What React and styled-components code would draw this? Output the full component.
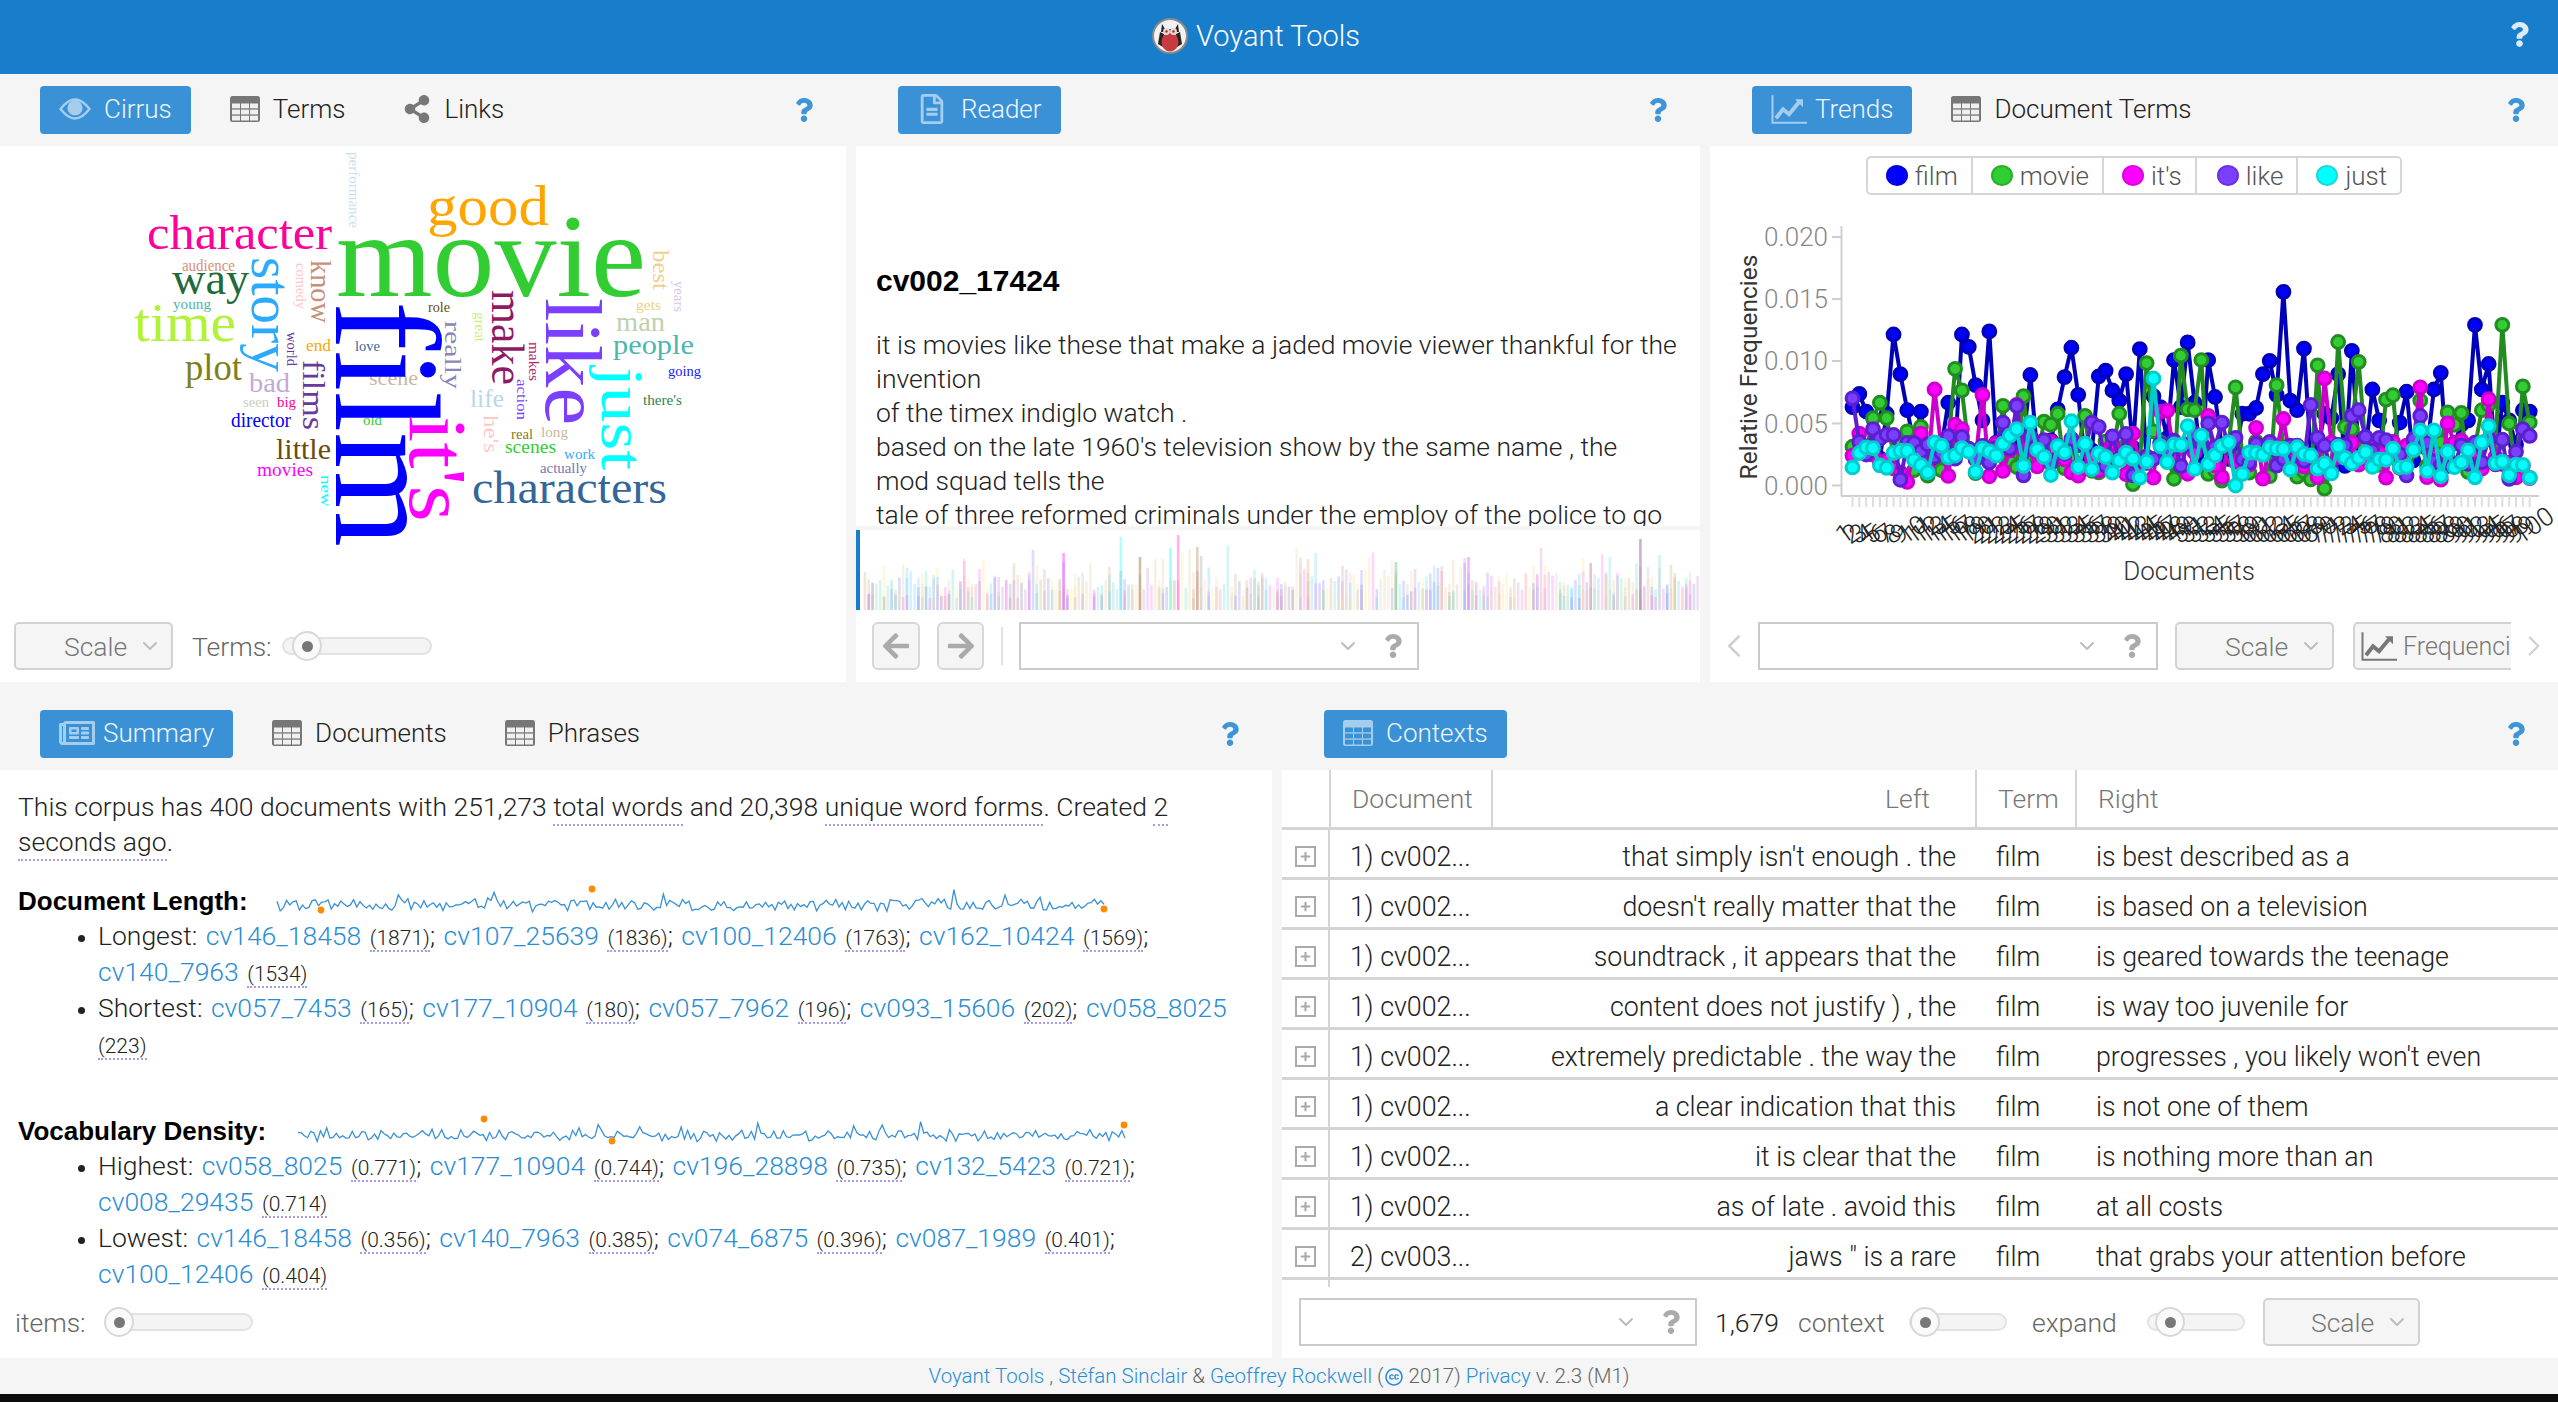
import React from 'react';
import styled, { createGlobalStyle } from 'styled-components';
import { FaShareAlt, FaRegFileAlt, FaRegNewspaper, FaQuestion, FaArrowLeft, FaArrowRight, FaCreativeCommons, FaPlus } from 'react-icons/fa';
import { ChevronDown, ChevronLeft, ChevronRight } from 'lucide-react';

const SANS = "Roboto, 'Liberation Sans', sans-serif";

const GlobalStyle = createGlobalStyle`
  html, body { margin: 0; padding: 0; background: #0c0c0c; overflow: hidden; }
  * { box-sizing: border-box; }
`;

const rng = (seed) => () => {
  seed = (seed * 1664525 + 1013904223) % 4294967296;
  return seed / 4294967296;
};

const Page = styled.div`
  width: 2558px;
  height: 1402px;
  display: flex;
  flex-direction: column;
  font-family: ${SANS};
  font-weight: 300;
  font-size: 26.5px;
  color: #222;
  background: #f5f5f5;
  border-bottom: 8px solid #0c0c0c;
`;

const Header = styled.header`
  height: 74px;
  flex: none;
  background: #187dca;
  display: flex;
  align-items: center;
  justify-content: center;
  gap: 8px;
  padding: 0 46px 3px 0;
  position: relative;
  color: #fff;
  font-size: 29px;
`;

const HeaderHelp = styled.span`
  position: absolute;
  right: 26px;
  top: 22px;
  color: #dcebf7;
  font-size: 25px;
  line-height: 1;
`;

const TopRow = styled.div`
  height: 608px;
  flex: none;
  display: grid;
  grid-template-columns: 846px 844px 1fr;
  gap: 10px;
`;

const BottomRow = styled.div`
  height: 676px;
  flex: none;
  display: grid;
  grid-template-columns: 1272px 1fr;
  gap: 10px;
`;

const Panel = styled.section`
  display: flex;
  flex-direction: column;
  min-width: 0;
  min-height: 0;
`;

const TabBar = styled.div`
  flex: none;
  height: ${(p) => p.$h}px;
  display: flex;
  align-items: flex-end;
  gap: 20px;
  padding: 0 30px 12px ${(p) => p.$pad}px;
`;

const Tab = styled.div`
  height: 48px;
  display: flex;
  align-items: center;
  gap: ${(p) => p.$gap || 13}px;
  padding: 0 19px 2px;
  border-radius: 4px;
  font-size: 26px;
  background: ${(p) => (p.$active ? '#3a91d6' : 'transparent')};
  color: ${(p) => (p.$active ? '#eef6fc' : '#222')};
  svg { flex: none; color: ${(p) => (p.$active ? '#a5cdee' : '#777')}; }
`;

const Help = styled.span`
  margin-left: auto;
  height: 48px;
  display: flex;
  align-items: center;
  color: #3d94d8;
  font-size: 24px;
`;

const Body = styled.div`
  flex: 1;
  min-height: 0;
  background: #fff;
  display: flex;
  flex-direction: column;
`;

const Toolbar = styled.div`
  flex: none;
  height: 48px;
  margin-bottom: 12px;
  display: flex;
  align-items: center;
  padding-left: ${(p) => p.$pad}px;
`;

const ScaleBtn = styled.div`
  flex: none;
  width: ${(p) => p.$w || 159}px;
  height: 48px;
  margin-left: ${(p) => p.$ml || 0}px;
  padding-left: ${(p) => p.$tx || 48}px;
  display: flex;
  align-items: center;
  gap: 11px;
  background: #f5f5f5;
  border: 2px solid #d2d2d2;
  border-radius: 5px;
  color: #777;
`;

const Label = styled.span`
  flex: none;
  width: ${(p) => p.$w}px;
  margin-left: ${(p) => p.$ml || 0}px;
  color: ${(p) => p.$c || '#666'};
`;

const Track = styled.div`
  flex: none;
  position: relative;
  width: ${(p) => p.$w}px;
  height: 18px;
  margin-left: ${(p) => p.$ml || 0}px;
  background: #f4f4f4;
  border: 2px solid #e2e2e2;
  border-radius: 9px;
`;

const Thumb = styled.div`
  position: absolute;
  top: -8px;
  left: ${(p) => p.$at}px;
  width: 30px;
  height: 30px;
  border-radius: 50%;
  background: #fafafa;
  border: 2px solid #d8d8d8;
  display: flex;
  align-items: center;
  justify-content: center;
  &::after {
    content: '';
    width: 11px;
    height: 11px;
    border-radius: 50%;
    background: #777;
  }
`;

const Slider = ({ w, ml, at }) => (
  <Track $w={w} $ml={ml}><Thumb $at={at} /></Track>
);

const ComboBox = styled.div`
  flex: none;
  width: ${(p) => p.$w}px;
  height: 48px;
  margin-left: ${(p) => p.$ml || 0}px;
  padding-right: 12px;
  border: 2px solid #cacaca;
  background: #fff;
  display: flex;
  align-items: center;
  justify-content: flex-end;
  gap: 21px;
  color: #aaa;
`;

const Combo = ({ w = 400, ml }) => (
  <ComboBox $w={w} $ml={ml}>
    <ChevronDown size={24} strokeWidth={2} color="#bdbdbd" />
    <FaQuestion size={24} />
  </ComboBox>
);

const Scale = ({ ml, w, tx }) => (
  <ScaleBtn $ml={ml} $w={w} $tx={tx}>
    Scale
    <ChevronDown size={24} strokeWidth={2} color="#bdbdbd" />
  </ScaleBtn>
);

/* icons */
const TableIcon = ({ cell = '#f0f0f0' }) => (
  <svg width="30" height="26" viewBox="0 0 30 26">
    <rect width="30" height="26" rx="2.5" fill="currentColor" />
    {[7.5, 13.6, 19.7].map((y) => [2, 11, 20].map((x) => (
      <rect key={`${x}-${y}`} x={x} y={y} width="8" height="4.8" fill={cell} />
    )))}
  </svg>
);

const EyeIcon = () => (
  <svg width="32" height="22" viewBox="0 0 32 22">
    <path d="M1.5 11C7 4 12 1.5 16 1.5S25 4 30.500 11C25 18 20 20.500 16 20.500S7 18 1.500 11Z" fill="none" stroke="currentColor" strokeWidth="2.4" />
    <circle cx="16" cy="10" r="7.6" fill="currentColor" />
  </svg>
);

const TrendIcon = ({ size = 36 }) => (
  <svg width={size} height={size * 0.85} viewBox="0 0 36 30" fill="none" stroke="currentColor">
    <path d="M1.500 1v27.500H36" strokeWidth="2" />
    <path d="M5 24l7-9 6 5 10-12" strokeWidth="4" />
    <path d="M24 5h8v8z" fill="currentColor" stroke="none" />
  </svg>
);

const OwlLogo = () => (
  <svg width="36" height="36" viewBox="0 0 36 36" role="img">
    <circle cx="18" cy="18" r="17" fill="#f2f2f2" stroke="#8a8a8a" strokeWidth="2" />
    <path d="M10 6l3 5h10l3-5 1 8H9z" fill="#2a2420" />
    <path d="M8 14l4 2-1 13-5-3zM28 14l-4 2 1 13 5-3z" fill="#2a2420" />
    <ellipse cx="18" cy="24" rx="8.500" ry="9.500" fill="#c63a40" />
    <circle cx="14.500" cy="13.500" r="3.400" fill="#ecd4d4" />
    <circle cx="21.500" cy="13.500" r="3.400" fill="#ecd4d4" />
    <circle cx="14.500" cy="13.500" r="1.200" fill="#8a3a3a" />
    <circle cx="21.500" cy="13.500" r="1.200" fill="#8a3a3a" />
  </svg>
);

/* cirrus */
const HORIZONTAL = [
  ['movie', 336, 646, 296, 118, '#32cd32'], ['good', 427, 549, 225, 58, '#ffa500'],
  ['character', 147, 332, 249, 48, '#ff0099'], ['way', 172, 249, 294, 46, '#1f6b3a'],
  ['time', 134, 236, 341, 55, '#b2f23a'], ['plot', 185, 242, 380, 38, '#7f7f22'],
  ['bad', 249, 290, 392, 28, '#c3a9d4'], ['audience', 182, 235, 271, 16, '#d8907a'],
  ['young', 173, 211, 309, 15, '#4db6ac'], ['seen', 243, 269, 407, 14, '#c8d0c0'],
  ['big', 277, 296, 407, 15, '#ff0090'], ['director', 231, 291, 427, 20, '#0000ff'],
  ['little', 276, 331, 459, 30, '#6b4c10'], ['movies', 257, 313, 476, 19, '#ff00ff'],
  ['end', 306, 331, 351, 17, '#ffa500'], ['love', 355, 380, 351, 15, '#3a6a9a'],
  ['role', 428, 450, 312, 14, '#6b4c10'], ['scene', 369, 418, 385, 22, '#c8b8a0'],
  ['old', 363, 382, 425, 14, '#32cd32'], ['man', 616, 665, 331, 27, '#c0d0b0'],
  ['people', 613, 694, 354, 27, '#4db6ac'], ['gets', 636, 661, 310, 14, '#f0d080'],
  ['going', 668, 701, 376, 14, '#2020ff'], ["there's", 643, 682, 405, 14, '#2f7f4f'],
  ['life', 470, 504, 407, 26, '#b8d8e8'], ['real', 511, 533, 439, 14, '#808020'],
  ['long', 541, 568, 437, 15, '#c8b8a0'], ['scenes', 505, 556, 453, 18, '#32cd32'],
  ['work', 564, 595, 459, 15, '#33aaff'], ['actually', 540, 587, 473, 15, '#7878b0'],
  ['characters', 472, 667, 503, 46, '#336699'],
];

const VERTICAL = [
  ['film', 336, 301, 547, 150, '#0000ff'], ["it's", 410, 416, 522, 82, '#ff00ff'],
  ['like', 546, 298, 425, 80, '#7b3fff'], ['just', 602, 367, 470, 62, '#00ffff'],
  ['make', 492, 290, 385, 46, '#8f1a63'], ['story', 252, 257, 372, 56, '#2baaff'],
  ['know', 311, 260, 323, 30, '#c8907a'], ['comedy', 296, 263, 309, 15, '#ffc8c8'],
  ['performance', 349, 152, 228, 15, '#c8dff0'], ['best', 653, 250, 290, 24, '#f0d090'],
  ['years', 674, 281, 312, 14, '#d8c8e8'], ['great', 475, 312, 342, 14, '#c8f080'],
  ['really', 445, 321, 389, 24, '#8888b8'], ['world', 287, 332, 366, 15, '#6a3a9a'],
  ['films', 303, 360, 430, 32, '#6a3a9a'], ['makes', 529, 342, 381, 14, '#aa2a6a'],
  ['action', 517, 379, 420, 15, '#7a40ff'], ["he's", 484, 415, 453, 22, '#ffc8c8'],
  ['new', 321, 475, 507, 15, '#00ffff'],
];

const CloudSvg = styled.svg`
  flex: 1;
  min-height: 0;
  display: block;
  font-family: 'Liberation Serif', serif;
`;

const Cirrus = () => (
  <CloudSvg width="846" height="476" viewBox="0 146 846 476">
    {HORIZONTAL.map(([t, x1, x2, y, s, c]) => (
      <text key={t} x={x1} y={y} fontSize={s} fill={c} textLength={x2 - x1} lengthAdjust="spacingAndGlyphs">{t}</text>
    ))}
    {VERTICAL.map(([t, x, y1, y2, s, c]) => (
      <text key={t} transform={`translate(${x},${y1}) rotate(90)`} fontSize={s} fill={c} textLength={y2 - y1} lengthAdjust="spacingAndGlyphs">{t}</text>
    ))}
  </CloudSvg>
);

/* reader */
const ReaderText = styled.div`
  height: 380px;
  flex: none;
  overflow: hidden;
  padding: 118px 0 0 20px;
  line-height: 34px;
  white-space: nowrap;
`;

const DocTitle = styled.div`
  font-family: 'Liberation Sans', sans-serif;
  font-weight: 700;
  font-size: 30px;
  color: #000;
  margin-bottom: 30px;
`;

const GraphSvg = styled.svg`
  display: block;
  flex: none;
  margin-bottom: 12px;
`;

const BAR_COLORS = ['#ff66ff', '#66ccff', '#c8a878', '#ffe680', '#bbbbbb', '#8080ff', '#66ddcc', '#f0d8a8', '#e8c8a0', '#cc88cc'];
const BAR_PEAKS = [
  [69, 73, '#66ffff'], [84, 75, '#ff66dd'], [89, 63, '#c8a878'], [205, 71, '#a060a0'], [74, 53, '#a08050'],
  [54, 57, '#ff44ff'], [82, 62, '#44ffff'], [116, 52, '#e0c8d8'], [118, 51, '#f0d090'], [160, 53, '#ff66ff'],
  [210, 55, '#a0e8e8'], [192, 47, '#cc88aa'], [141, 48, '#66ccaa'], [90, 54, '#c0c0c0'],
];

const ReaderGraph = () => {
  const r = rng(17);
  const bars = [];
  for (let i = 2; i < 222; i++) {
    const n = 1 + Math.floor(r() * 3);
    for (let k = 0; k < n; k++) {
      const h = 12 + r() * r() * 48 + (k === 0 ? 8 : 0);
      bars.push(<rect key={`${i}-${k}`} x={i * 3.82} y={80 - h} width="2.6" height={h} fill={BAR_COLORS[Math.floor(r() * 10)]} opacity="0.28" />);
    }
  }
  BAR_PEAKS.forEach(([i, h, c]) => {
    bars.push(<rect key={`p${i}`} x={i * 3.82} y={80 - h} width="2.6" height={h} fill={c} opacity="0.5" />);
  });
  return (
    <GraphSvg width="844" height="80" viewBox="0 0 844 80">
      <rect x="0" y="0" width="4" height="80" fill="#187dca" />
      {bars}
    </GraphSvg>
  );
};

const ReaderGap = styled.div`
  height: 4px;
  flex: none;
  background: #f5f5f5;
`;

const SquareBtn = styled.div`
  flex: none;
  width: ${(p) => p.$w}px;
  height: 48px;
  margin-left: ${(p) => p.$ml || 0}px;
  background: #f5f5f5;
  border: 2px solid #d6d6d6;
  border-radius: 6px;
  color: #aaa;
  display: flex;
  align-items: center;
  justify-content: center;
`;

const Separator = styled.div`
  flex: none;
  width: 2px;
  height: 38px;
  margin-left: ${(p) => p.$ml}px;
  background: #e2e2e2;
`;

/* trends */
const Legend = styled.div`
  flex: none;
  align-self: center;
  margin-top: 10px;
  height: 39px;
  display: flex;
  border: 2px solid #d6d6d6;
  border-radius: 5px;
  color: #555;
  font-size: 26px;
`;

const LegendItem = styled.div`
  display: flex;
  align-items: center;
  gap: 7px;
  padding: 0 ${(p) => p.$pr}px 0 ${(p) => p.$pl}px;
  border-left: ${(p) => (p.$first ? 'none' : '2px solid #d6d6d6')};
`;

const Dot = styled.span`
  width: 22px;
  height: 21px;
  border-radius: 50%;
  background: ${(p) => p.$c};
  border: 2px solid ${(p) => p.$b};
`;

const SERIES = [
  {
    name: 'film', fill: '#0000ff', stroke: '#0000b8', low: [990, 1060], seed: 5,
    peaks: { 0: 925, 1: 895, 2: 935, 5: 940, 6: 760, 7: 850, 8: 932, 10: 935, 14: 915, 16: 760, 17: 788, 18: 875, 19: 955, 20: 753, 26: 852, 30: 930, 31: 857, 32: 790, 33: 897, 36: 855, 37: 842, 38: 887, 39: 910, 40: 850, 42: 793, 44: 900, 45: 925, 47: 818, 48: 925, 49: 778, 50: 915, 52: 818, 53: 902, 57: 940, 58: 940, 59: 927, 60: 850, 61: 820, 62: 897, 63: 663, 64: 910, 65: 932, 66: 792, 69: 940, 70: 950, 71: 850, 73: 797, 76: 885, 77: 955, 80: 960, 81: 890, 85: 885, 86: 847, 89: 965, 90: 955, 91: 738, 92: 885, 93: 827, 95: 915, 96: 955, 98: 932, 99: 935 },
  },
  {
    name: 'movie', fill: '#32cd32', stroke: '#228b22', low: [1000, 1095], seed: 11,
    peaks: { 0: 1015, 3: 950, 4: 915, 5: 950, 8: 980, 10: 970, 15: 838, 16: 887, 22: 922, 25: 900, 28: 958, 29: 965, 30: 940, 34: 945, 39: 940, 41: 1100, 43: 825, 44: 980, 48: 808, 49: 930, 50: 932, 51: 818, 56: 880, 62: 875, 68: 830, 69: 1110, 71: 777, 72: 970, 73: 975, 74: 822, 78: 908, 79: 898, 83: 910, 87: 937, 88: 965, 89: 938, 92: 932, 93: 920, 95: 738, 96: 962, 98: 878, 99: 960 },
  },
  {
    name: "it's", fill: '#ff00ff', stroke: '#cc00cc', low: [1000, 1090], seed: 23,
    peaks: { 0: 1035, 1: 985, 10: 985, 12: 885, 15: 965, 16: 975, 19: 897, 24: 920, 41: 985, 45: 935, 46: 933, 52: 945, 59: 972, 63: 952, 69: 860, 83: 880, 87: 962, 93: 907, 20: 1082, 8: 1095, 44: 1085, 78: 1085 },
  },
  {
    name: 'like', fill: '#7b3fff', stroke: '#5c1fd0', low: [985, 1060], seed: 37,
    peaks: { 0: 905, 3: 975, 22: 960, 24: 922, 35: 960, 36: 970, 52: 962, 54: 960, 67: 920, 73: 945, 74: 932, 83: 945, 98: 975, 7: 1090, 25: 1080, 41: 1080, 70: 1068, 81: 1080, 96: 1088 },
  },
  {
    name: 'just', fill: '#00ffff', stroke: '#00cccc', low: [1010, 1085], seed: 53,
    peaks: { 0: 1062, 12: 1005, 21: 1035, 22: 1008, 23: 990, 24: 975, 26: 960, 32: 957, 34: 1008, 44: 860, 49: 968, 51: 990, 55: 1005, 56: 1103, 57: 1077, 83: 978, 85: 978, 93: 968, 92: 1005, 99: 1085, 42: 1085, 47: 1010 },
  },
];

const chartX = (i) => (278 + 12.47 * i) / 1.823 - 10;
const chartY = (zy) => zy / 2.272 - 195;

const seriesPoints = (s) => {
  const r = rng(s.seed);
  const pts = [];
  for (let i = 0; i < 100; i++) {
    const zy = s.peaks[i] ?? s.low[0] + r() * (s.low[1] - s.low[0]);
    pts.push([chartX(i), chartY(zy)]);
  }
  return pts;
};

const ChartSvg = styled.svg`
  display: block;
  flex: none;
  font-family: ${SANS};
  font-weight: 300;
`;

const TICKS = [['0.020', 237], ['0.015', 299], ['0.010', 361], ['0.005', 423.5], ['0.000', 485.5]];

const TrendChart = () => (
  <ChartSvg width="848" height="427" viewBox="0 0 848 427">
    <line x1="131.5" y1="31" x2="131.5" y2="301" stroke="#cfcfcf" strokeWidth="2" />
    <line x1="131" y1="301" x2="829" y2="301" stroke="#cfcfcf" strokeWidth="2" />
    {TICKS.map(([t, y]) => (
      <g key={t}>
        <line x1="122" x2="131" y1={y - 195} y2={y - 195} stroke="#cfcfcf" strokeWidth="2" />
        <text x="118" y={y - 195 + 9} textAnchor="end" fontSize="26" fill="#888">{t}</text>
      </g>
    ))}
    {Array.from({ length: 100 }, (_, i) => (
      <g key={i}>
        <line x1={chartX(i)} x2={chartX(i)} y1="301" y2="312" stroke="#dedede" strokeWidth="2" />
        <text transform={`translate(${chartX(i) - 9},350) rotate(-35)`} fontSize="26" fill="#222">{i + 1}</text>
      </g>
    ))}
    <text transform="translate(47,172) rotate(-90)" textAnchor="middle" fontSize="24.5" fill="#333" fontWeight="400">Relative Frequencies</text>
    <text x="479" y="385" textAnchor="middle" fontSize="26" fill="#333">Documents</text>
    {SERIES.map((s) => {
      const pts = seriesPoints(s);
      return (
        <g key={s.name}>
          <polyline points={pts.map((p) => p.join(',')).join(' ')} fill="none" stroke={s.stroke} strokeWidth="4" />
          {pts.map(([x, y], i) => (
            <circle key={i} cx={x} cy={y} r="6.4" fill={s.fill} stroke={s.stroke} strokeWidth="3" />
          ))}
        </g>
      );
    })}
  </ChartSvg>
);

const ClipBox = styled.div`
  flex: none;
  width: 158px;
  margin-left: 19px;
  overflow: hidden;
`;

const WideBtn = styled.div`
  width: 240px;
  height: 48px;
  padding-left: 6px;
  display: flex;
  align-items: center;
  gap: 6px;
  background: #f5f5f5;
  border: 2px solid #d2d2d2;
  border-radius: 5px;
  color: #777;
  font-size: 25px;
`;

const ArrowSlot = styled.div`
  flex: none;
  width: ${(p) => p.$w}px;
  margin-left: ${(p) => p.$ml || 0}px;
  display: flex;
  justify-content: center;
  color: #d0d0d0;
`;

/* summary */
const SummaryText = styled.div`
  flex: 1;
  min-height: 0;
  overflow: hidden;
  padding: 19px 14px 0 18px;
`;

const Lead = styled.p`
  margin: 0;
  line-height: 35px;
`;

const Term = styled.span`
  border-bottom: 2px dotted #a59cf0;
  padding-bottom: 2px;
`;

const HeadRow = styled.div`
  display: flex;
  align-items: center;
  height: 35px;
  margin-top: ${(p) => p.$mt}px;
`;

const Heading = styled.div`
  flex: none;
  width: ${(p) => p.$w}px;
  font-family: 'Liberation Sans', sans-serif;
  font-weight: 700;
  font-size: 26px;
  color: #000;
`;

const Stats = styled.ul`
  margin: -1px 0 0;
  padding: 0 0 0 80px;
  line-height: 36px;
  word-spacing: 2px;
  li::marker { font-size: 22px; }
`;

const DocLink = styled.a`
  color: #2a8dd4;
`;

const Count = styled.span`
  font-size: 21px;
  line-height: 1;
  border-bottom: 2px dotted #a59cf0;
`;

const Sparkline = ({ w, seed, dots, amp }) => {
  const r = rng(seed);
  let d = '';
  for (let i = 0; i < 260; i++) {
    const up = r() < 0.07 ? r() * amp : r() * amp * 0.5;
    const y = 19 + 4 - up + r() * 4;
    d += `${i ? 'L' : 'M'}${((i * w) / 259).toFixed(1)} ${y.toFixed(1)}`;
  }
  return (
    <svg width={w + 6} height="34" viewBox={`0 0 ${w + 6} 34`} style={{ flex: 'none', overflow: 'visible' }}>
      <path d={d} fill="none" stroke="#3a91d6" strokeWidth="1.3" />
      {dots.map(([x, y]) => <circle key={x} cx={x} cy={y} r="3.4" fill="#ff8c00" />)}
    </svg>
  );
};

const Entry = ({ name, v, last }) => (
  <>
    <DocLink>{name}</DocLink> <Count>({v})</Count>{last ? '' : '; '}
  </>
);

const StatLine = ({ label, items }) => (
  <li>
    {label}: {items.map(([n, v], i) => <Entry key={n} name={n} v={v} last={i === items.length - 1} />)}
  </li>
);

/* contexts table */
const COLUMNS = '47px 162px 484px 100px 1fr';

const HeadGrid = styled.div`
  flex: none;
  height: 60px;
  display: grid;
  grid-template-columns: ${COLUMNS};
  border-bottom: 3px solid #d4d4d4;
  color: #777;
`;

const HeadCell = styled.div`
  display: flex;
  align-items: center;
  justify-content: ${(p) => (p.$right ? 'flex-end' : 'flex-start')};
  padding: ${(p) => (p.$right ? '0 45px 0 0' : '0 0 0 21px')};
  border-left: ${(p) => (p.$first ? 'none' : '2px solid #d4d4d4')};
`;

const RowList = styled.div`
  flex: none;
  height: 457px;
  overflow: hidden;
  font-size: 26.800px;
`;

const RowGrid = styled.div`
  height: 50px;
  display: grid;
  grid-template-columns: ${COLUMNS};
  border-bottom: 3px solid #d4d4d4;
`;

const Cell = styled.div`
  display: flex;
  align-items: center;
  justify-content: ${(p) => (p.$right ? 'flex-end' : 'flex-start')};
  padding: ${(p) => (p.$right ? '7px 19px 0 0' : '7px 0 0 21px')};
  white-space: nowrap;
`;

const ExpandCell = styled.div`
  display: flex;
  align-items: center;
  padding: 5px 0 0 13px;
  border-right: 2px solid #d4d4d4;
  margin-right: -1px;
`;

const ExpandBox = styled.div`
  width: 21px;
  height: 21px;
  border: 2px solid #aaa;
  display: flex;
  align-items: center;
  justify-content: center;
  color: #aaa;
`;

const ROWS = [
  ['1) cv002...', "that simply isn't enough . the", 'is best described as a'],
  ['1) cv002...', "doesn't really matter that the", 'is based on a television'],
  ['1) cv002...', 'soundtrack , it appears that the', 'is geared towards the teenage'],
  ['1) cv002...', 'content does not justify ) , the', 'is way too juvenile for'],
  ['1) cv002...', 'extremely predictable . the way the', "progresses , you likely won't even"],
  ['1) cv002...', 'a clear indication that this', 'is not one of them'],
  ['1) cv002...', 'it is clear that the', 'is nothing more than an'],
  ['1) cv002...', 'as of late . avoid this', 'at all costs'],
  ['2) cv003...', 'jaws " is a rare', 'that grabs your attention before'],
];

const TableGap = styled.div`
  flex: 1;
`;

const Footer = styled.footer`
  flex: 1;
  display: flex;
  align-items: center;
  justify-content: center;
  font-size: 20.500px;
  color: #666;
  background: #f5f5f5;
  border-radius: 0 0 10px 10px;
  a { color: #2a8dd4; }
  svg { color: #2a8dd4; margin: 0 1px; vertical-align: -3px; }
`;

const App = () => (
  <>
    <GlobalStyle />
    <Page>
      <Header>
        <OwlLogo />
        <span>Voyant Tools</span>
        <HeaderHelp><FaQuestion /></HeaderHelp>
      </Header>

      <TopRow>
        <Panel>
          <TabBar $h={72} $pad={40}>
            <Tab $active><EyeIcon />Cirrus</Tab>
            <Tab><TableIcon />Terms</Tab>
            <Tab><FaShareAlt size={28} />Links</Tab>
            <Help><FaQuestion /></Help>
          </TabBar>
          <Body>
            <Cirrus />
            <Toolbar $pad={14}>
              <Scale />
              <Label $w={90} $ml={19}>Terms:</Label>
              <Slider w={150} at={8} />
            </Toolbar>
          </Body>
        </Panel>

        <Panel>
          <TabBar $h={72} $pad={42}>
            <Tab $active $gap={14}><FaRegFileAlt size={30} />Reader</Tab>
            <Help><FaQuestion /></Help>
          </TabBar>
          <Body>
            <ReaderText>
              <DocTitle>cv002_17424</DocTitle>
              it is movies like these that make a jaded movie viewer thankful for the<br />
              invention<br />
              of the timex indiglo watch .<br />
              based on the late 1960's television show by the same name , the<br />
              mod squad tells the<br />
              tale of three reformed criminals under the employ of the police to go
            </ReaderText>
            <ReaderGap />
            <ReaderGraph />
            <Toolbar $pad={16}>
              <SquareBtn $w={48}><FaArrowLeft size={30} /></SquareBtn>
              <SquareBtn $w={47} $ml={17}><FaArrowRight size={30} /></SquareBtn>
              <Separator $ml={17} />
              <Combo ml={16} />
            </Toolbar>
          </Body>
        </Panel>

        <Panel>
          <TabBar $h={72} $pad={42}>
            <Tab $active $gap={8}><TrendIcon />Trends</Tab>
            <Tab><TableIcon />Document Terms</Tab>
            <Help><FaQuestion /></Help>
          </TabBar>
          <Body>
            <Legend>
              <LegendItem $first $pl={18} $pr={13}><Dot $c="#0000ff" $b="#0000e0" />film</LegendItem>
              <LegendItem $pl={18} $pr={13}><Dot $c="#32cd32" $b="#28b028" />movie</LegendItem>
              <LegendItem $pl={18} $pr={13}><Dot $c="#ff00ff" $b="#e000e0" />it's</LegendItem>
              <LegendItem $pl={20} $pr={13}><Dot $c="#7b3fff" $b="#6a30e8" />like</LegendItem>
              <LegendItem $pl={18} $pr={13}><Dot $c="#00ffff" $b="#20d8d8" />just</LegendItem>
            </Legend>
            <TrendChart />
            <Toolbar $pad={0}>
              <ArrowSlot $w={48}><ChevronLeft size={38} strokeWidth={1.6} /></ArrowSlot>
              <Combo />
              <Scale ml={17} />
              <ClipBox>
                <WideBtn><TrendIcon size={36} />Frequencies</WideBtn>
              </ClipBox>
              <ArrowSlot $w={34} $ml={6}><ChevronRight size={38} strokeWidth={1.6} /></ArrowSlot>
            </Toolbar>
          </Body>
        </Panel>
      </TopRow>

      <BottomRow>
        <Panel>
          <TabBar $h={88} $pad={40}>
            <Tab $active $gap={8}><FaRegNewspaper size={36} />Summary</Tab>
            <Tab><TableIcon />Documents</Tab>
            <Tab><TableIcon />Phrases</Tab>
            <Help><FaQuestion /></Help>
          </TabBar>
          <Body>
            <SummaryText>
              <Lead>
                This corpus has 400 documents with 251,273 <Term>total words</Term> and 20,398 <Term>unique word forms</Term>. Created <Term>2 seconds ago</Term>.
              </Lead>
              <HeadRow $mt={25}>
                <Heading $w={259}>Document Length:</Heading>
                <Sparkline w={827} seed={7} amp={20} dots={[[44, 25], [315, 4], [827, 24]]} />
              </HeadRow>
              <Stats>
                <StatLine label="Longest" items={[['cv146_18458', 1871], ['cv107_25639', 1836], ['cv100_12406', 1763], ['cv162_10424', 1569], ['cv140_7963', 1534]]} />
                <StatLine label="Shortest" items={[['cv057_7453', 165], ['cv177_10904', 180], ['cv057_7962', 196], ['cv093_15606', 202], ['cv058_8025', 223]]} />
              </Stats>
              <HeadRow $mt={52}>
                <Heading $w={280}>Vocabulary Density:</Heading>
                <Sparkline w={827} seed={41} amp={18} dots={[[186, 4], [314, 26], [826, 10]]} />
              </HeadRow>
              <Stats>
                <StatLine label="Highest" items={[['cv058_8025', '0.771'], ['cv177_10904', '0.744'], ['cv196_28898', '0.735'], ['cv132_5423', '0.721'], ['cv008_29435', '0.714']]} />
                <StatLine label="Lowest" items={[['cv146_18458', '0.356'], ['cv140_7963', '0.385'], ['cv074_6875', '0.396'], ['cv087_1989', '0.401'], ['cv100_12406', '0.404']]} />
              </Stats>
            </SummaryText>
            <Toolbar $pad={15}>
              <Label $w={90}>items:</Label>
              <Slider w={148} at={-3} />
            </Toolbar>
          </Body>
        </Panel>

        <Panel>
          <TabBar $h={88} $pad={42}>
            <Tab $active><TableIcon cell="#3a91d6" />Contexts</Tab>
            <Help><FaQuestion /></Help>
          </TabBar>
          <Body>
            <HeadGrid>
              <HeadCell $first />
              <HeadCell>Document</HeadCell>
              <HeadCell $right>Left</HeadCell>
              <HeadCell>Term</HeadCell>
              <HeadCell>Right</HeadCell>
            </HeadGrid>
            <RowList>
              {[...ROWS, ['', '', '']].map(([doc, left, right], i) => (
                <RowGrid key={i}>
                  <ExpandCell>{doc && <ExpandBox><FaPlus size={11} /></ExpandBox>}</ExpandCell>
                  <Cell>{doc}</Cell>
                  <Cell $right>{left}</Cell>
                  <Cell>{doc && 'film'}</Cell>
                  <Cell>{right}</Cell>
                </RowGrid>
              ))}
            </RowList>
            <TableGap />
            <Toolbar $pad={17}>
              <Combo w={398} />
              <Label $w={83} $ml={18} $c="#222">1,679</Label>
              <Label $w={111}>context</Label>
              <Slider w={98} at={-1} />
              <Label $w={115} $ml={25}>expand</Label>
              <Slider w={98} at={6} />
              <Scale ml={18} w={157} tx={46} />
            </Toolbar>
          </Body>
        </Panel>
      </BottomRow>

      <Footer>
        <span>
          <a>Voyant Tools</a> , <a>Stéfan Sinclair</a> &amp; <a>Geoffrey Rockwell</a> (<FaCreativeCommons size={18} /> 2017) <a>Privacy</a> v. 2.3 (M1)
        </span>
      </Footer>
    </Page>
  </>
);

export default App;
